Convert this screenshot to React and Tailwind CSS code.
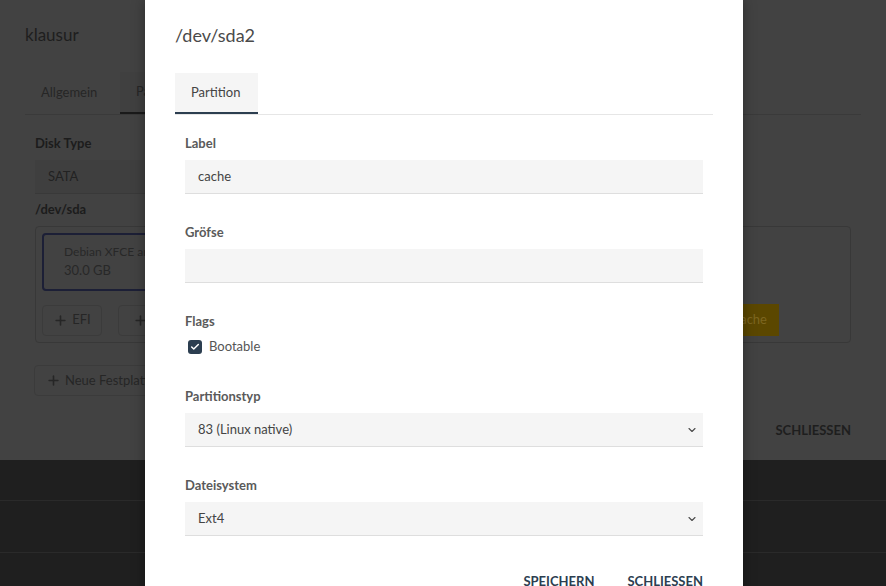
import React from 'react'
import { ChevronDown, Check, Plus } from 'lucide-react'

const font = { fontFamily: 'Lato, "Noto Sans", sans-serif' }

function Field({ label, children, className = '' }) {
  return (
    <div className={className}>
      <div className="text-[13px] leading-[17px] font-bold text-[#5a5a5a]">{label}</div>
      <div className="mt-2">{children}</div>
    </div>
  )
}

function Input({ value }) {
  return (
    <div className="h-[34px] bg-[#f5f5f5] border-b border-[#dedede] px-[13px] flex items-center text-[13px] text-[#444]">
      {value}
    </div>
  )
}

function Select({ value }) {
  return (
    <div className="h-[34px] bg-[#f5f5f5] border-b border-[#dedede] pl-[13px] pr-[5px] flex items-center justify-between text-[13px] text-[#444]">
      <span>{value}</span>
      <ChevronDown size={12} strokeWidth={2.2} className="text-[#4a4a4a]" />
    </div>
  )
}

function BackgroundDialog() {
  return (
    <div className="h-[460px] bg-[#424242] px-[25px] pt-[24px] text-[#1e1e1e]">
      <div className="text-[17px] leading-[22px]">klausur</div>
      <div className="mt-[26px] flex border-b border-[#3a3a3a] h-[43px] text-[13px]">
        <div className="w-[95px] px-4 flex items-center text-[#262626]">Allgemein</div>
        <div className="px-4 flex items-center bg-[#404040] border-b-2 border-[#1a1a1a] text-[#262626]">Partitionen</div>
      </div>
      <div className="px-[10px] pt-[20px]">
        <div className="text-[13px] leading-[17px] font-bold text-[#1c1c1c]">Disk Type</div>
        <div className="mt-2 h-[34px] w-[300px] bg-[#3f3f3f] border-b border-[#393939] px-[13px] flex items-center text-[13px] text-[#222]">SATA</div>
        <div className="mt-[7px] text-[13px] leading-[17px] font-bold text-[#1c1c1c]">/dev/sda</div>
        <div className="mt-2 h-[117px] border border-[#383838] rounded p-[6px]">
          <div className="h-[58px] w-[300px] border-2 border-[#1c1f36] rounded px-[20px] pt-[8px] text-[#282828]">
            <div className="text-[12px] leading-[18px]">Debian XFCE and Tools</div>
            <div className="text-[13px] leading-[18px]">30.0 GB</div>
          </div>
          <div className="mt-[13px] flex items-center">
            <div className="h-[31px] w-[60px] border border-[#3b3b3b] rounded-sm flex items-center justify-center gap-1 text-[13px] text-[#262626]">
              <Plus size={15} strokeWidth={2.5} />EFI
            </div>
            <div className="ml-[16px] h-[31px] w-[80px] border border-[#3b3b3b] rounded-sm flex items-center justify-center gap-1 text-[13px] text-[#262626]">
              <Plus size={15} strokeWidth={2.5} />Swap
            </div>
            <div className="ml-auto mr-[65px] h-[32px] px-[12px] bg-[#5b4700] flex items-center gap-1 text-[13px] text-[#7d6620]">
              <Plus size={14} strokeWidth={2.5} />Cache
            </div>
          </div>
        </div>
        <div className="mt-[22px] h-[31px] w-[160px] -ml-[1px] border border-[#3b3b3b] rounded-sm flex items-center px-[11px] gap-1 text-[13px] text-[#262626]">
          <Plus size={15} strokeWidth={2.5} />Neue Festplatte
        </div>
      </div>
      <div className="mt-[25px] flex justify-end gap-[32px] pr-[10px] text-[13px] font-bold text-[#1e1e1e]">
        <span>SPEICHERN</span>
        <span>SCHLIESSEN</span>
      </div>
    </div>
  )
}

export default function App() {
  return (
    <div className="relative w-[886px] h-[586px] overflow-hidden bg-[#1f1f1f]" style={font}>
      <BackgroundDialog />
      <div className="border-b border-[#2a2a2a] h-[41px]" />
      <div className="border-b border-[#2a2a2a] h-[52px]" />

      <div className="absolute left-[145px] top-0 w-[598px] h-[620px] bg-white shadow-[0_0_12px_rgba(0,0,0,0.35)] px-[30px] pt-[24px]">
        <div className="text-[18px] leading-[22px] text-[#4a4a4a]">/dev/sda2</div>
        <div className="mt-[27px] flex border-b border-[#e6e6e6] h-[42px]">
          <div className="w-[83px] px-4 flex items-center bg-[#f5f5f5] border-b-2 border-[#2c3e50] text-[13px] text-[#444]">Partition</div>
        </div>
        <div className="px-[10px] pt-[20px]">
          <Field label="Label">
            <Input value="cache" />
          </Field>
          <Field label="Gröfse" className="mt-[30px]">
            <Input value="" />
          </Field>
          <div className="mt-[30px]">
            <div className="text-[13px] leading-[17px] font-bold text-[#5a5a5a]">Flags</div>
            <div className="mt-[8px] h-[18px] flex items-center pl-[3px]">
              <div className="w-[14px] h-[14px] rounded-[3px] bg-[#2c3e50] flex items-center justify-center">
                <Check size={10} strokeWidth={3.5} className="text-white" />
              </div>
              <span className="ml-[7px] text-[13px] text-[#555]">Bootable</span>
            </div>
          </div>
          <Field label="Partitionstyp" className="mt-[32px]">
            <Select value="83 (Linux native)" />
          </Field>
          <Field label="Dateisystem" className="mt-[30px]">
            <Select value="Ext4" />
          </Field>
          <div className="mt-[36px] flex justify-end gap-[33px] text-[13px] font-bold text-[#2c3e50]">
            <span>SPEICHERN</span>
            <span>SCHLIESSEN</span>
          </div>
        </div>
      </div>
    </div>
  )
}
